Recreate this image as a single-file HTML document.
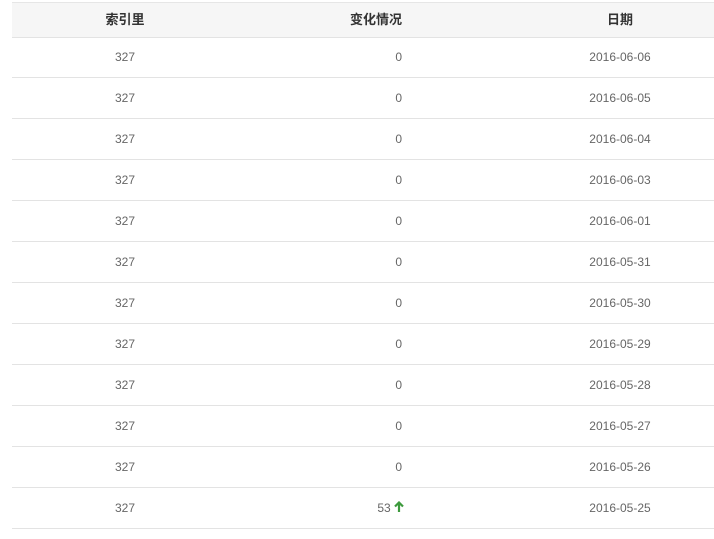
<!DOCTYPE html>
<html><head><meta charset="utf-8"><style>
body{margin:0;background:#fff;font-family:"Liberation Sans","Noto Sans CJK SC",sans-serif;}
.h{position:absolute;left:12px;top:2px;width:702px;height:34px;background:#f6f6f6;border-top:1px solid #e6e6e6;border-bottom:1px solid #e3e3e3;}
.r{position:absolute;left:12px;width:702px;height:40px;border-bottom:1px solid #e3e3e3;}
.c{position:absolute;top:0;line-height:40px;font-size:12px;color:#666;}
.h .c{line-height:34px;font-size:13px;font-weight:bold;color:#333;}
.a{left:0;width:226px;text-align:center;}
.b{right:312px;text-align:right;}
.d{left:508px;width:200px;text-align:center;}
</style></head><body>
<div class="h"><div class="c a">索引里</div><div class="c b">变化情况</div><div class="c d">日期</div></div>
<div class="r" style="top:37px"><div class="c a">327</div><div class="c b">0</div><div class="c d">2016-06-06</div></div>
<div class="r" style="top:78px"><div class="c a">327</div><div class="c b">0</div><div class="c d">2016-06-05</div></div>
<div class="r" style="top:119px"><div class="c a">327</div><div class="c b">0</div><div class="c d">2016-06-04</div></div>
<div class="r" style="top:160px"><div class="c a">327</div><div class="c b">0</div><div class="c d">2016-06-03</div></div>
<div class="r" style="top:201px"><div class="c a">327</div><div class="c b">0</div><div class="c d">2016-06-01</div></div>
<div class="r" style="top:242px"><div class="c a">327</div><div class="c b">0</div><div class="c d">2016-05-31</div></div>
<div class="r" style="top:283px"><div class="c a">327</div><div class="c b">0</div><div class="c d">2016-05-30</div></div>
<div class="r" style="top:324px"><div class="c a">327</div><div class="c b">0</div><div class="c d">2016-05-29</div></div>
<div class="r" style="top:365px"><div class="c a">327</div><div class="c b">0</div><div class="c d">2016-05-28</div></div>
<div class="r" style="top:406px"><div class="c a">327</div><div class="c b">0</div><div class="c d">2016-05-27</div></div>
<div class="r" style="top:447px"><div class="c a">327</div><div class="c b">0</div><div class="c d">2016-05-26</div></div>
<div class="r" style="top:488px"><div class="c a">327</div><div class="c b" style="right:310px">53 <svg width="10" height="12" viewBox="0 0 10 12" style="vertical-align:-1px"><path d="M5 11V2M1 5.5L5 1.5L9 5.5" stroke="#3d9a3d" stroke-width="2.2" fill="none"/></svg></div><div class="c d">2016-05-25</div></div>
</body></html>
